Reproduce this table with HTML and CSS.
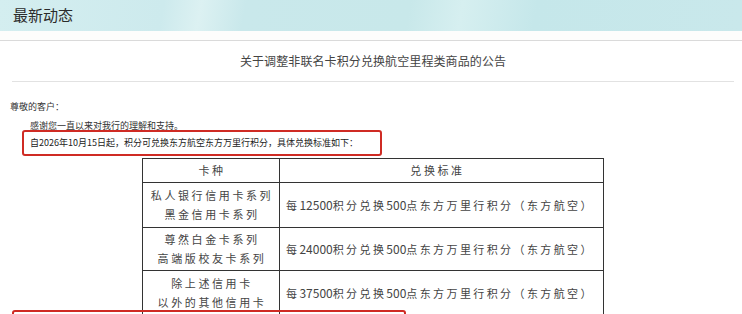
FILE: index.html
```html
<!DOCTYPE html>
<html lang="zh-CN">
<head>
<meta charset="utf-8">
<title>最新动态</title>
<link rel="stylesheet" href="styles.css">
</head>
<body>
<div class="page">
  <div class="topbar">最新动态</div>
  <div class="strip"></div>
  <div class="title">关于调整非联名卡积分兑换航空里程类商品的公告</div>
  <div class="content">
    <p class="greet">尊敬的客户：</p>
    <p class="thanks">感谢您一直以来对我行的理解和支持。</p>
    <div class="mark">自2026年10月15日起，积分可兑换东方航空东方万里行积分，具体兑换标准如下：</div>
    <table class="rates">
      <tr class="head"><th class="c1">卡种</th><th class="c2">兑换标准</th></tr>
      <tr class="r1"><td class="c1">私人银行信用卡系列<br>黑金信用卡系列</td><td class="c2">每<span class="num">12500</span>积分兑换<span class="num">500</span>点东方万里行积分（东方航空）</td></tr>
      <tr class="r2"><td class="c1">尊然白金卡系列<br>高端版校友卡系列</td><td class="c2">每<span class="num">24000</span>积分兑换<span class="num">500</span>点东方万里行积分（东方航空）</td></tr>
      <tr class="r3"><td class="c1">除上述信用卡<br>以外的其他信用卡</td><td class="c2">每<span class="num">37500</span>积分兑换<span class="num">500</span>点东方万里行积分（东方航空）</td></tr>
    </table>
  </div>
  <div class="mark2"></div>
</div>
</body>
</html>
```
FILE: styles.css
```css
html, body {
  margin: 0;
  padding: 0;
  background: #ffffff;
}
body {
  font-family: "Noto Sans CJK SC", "Noto Sans", sans-serif;
  color: #333;
}
.page {
  position: relative;
  width: 742px;
  height: 314px;
  overflow: hidden;
}
.topbar {
  height: 31px;
  line-height: 30px;
  padding-left: 13px;
  font-size: 15px;
  color: #2b2b2b;
  background: linear-gradient(100deg, #d4eef0 0%, #cdeaed 22%, #dcf1f2 27%, #c9e8eb 33%, #c8e8ea 55%, #d6eff0 62%, #c5e7ea 72%, #c9e8eb 100%);
}
.strip {
  height: 9px;
  background: #fdfdfc;
  border-bottom: 1px solid #dadada;
}
.title {
  height: 40px;
  line-height: 40px;
  margin: 0 8px 0 12px;
  text-align: center;
  font-size: 12px;
  letter-spacing: 0.1px;
  color: #444;
  border-bottom: 1px solid #e2e2e2;
}
.content {
  padding-left: 10px;
  font-size: 9px;
}
.greet {
  margin: 16px 0 0 0;
  height: 18px;
  line-height: 18px;
}
.thanks {
  margin: 1px 0 0 20px;
  height: 18px;
  line-height: 18px;
}
.mark {
  margin: -5px 0 0 12px;
  width: 350px;
  height: 22px;
  line-height: 22px;
  padding-left: 6px;
  border: 2px solid #cf2b24;
  border-radius: 3px;
  color: #222;
}
.rates {
  margin: 2px 0 0 132px;
  border-collapse: collapse;
  width: 462px;
  color: #444;
  font-size: 11px;
  letter-spacing: 2.6px;
}
.rates th, .rates td {
  border: 1px solid #333;
  padding: 0;
  font-weight: normal;
  line-height: 19px;
}
.rates .c1 {
  width: 134px;
  text-align: center;
  padding-left: 2px;
}
.rates td.c2 {
  text-align: left;
  padding-left: 6px;
  letter-spacing: 2.4px;
}
.rates th.c2 {
  text-align: center;
  padding-right: 8px;
}
.rates .head th { height: 23px; }
.rates .r1 td { height: 44px; }
.rates .r2 td { height: 42px; }
.rates .r3 td { height: 44px; }
.num {
  letter-spacing: 0;
  font-size: 12px;
}
.mark2 {
  position: absolute;
  left: 12px;
  top: 310px;
  width: 390px;
  height: 30px;
  border: 2px solid #cf2b24;
  border-radius: 3px;
}
```
